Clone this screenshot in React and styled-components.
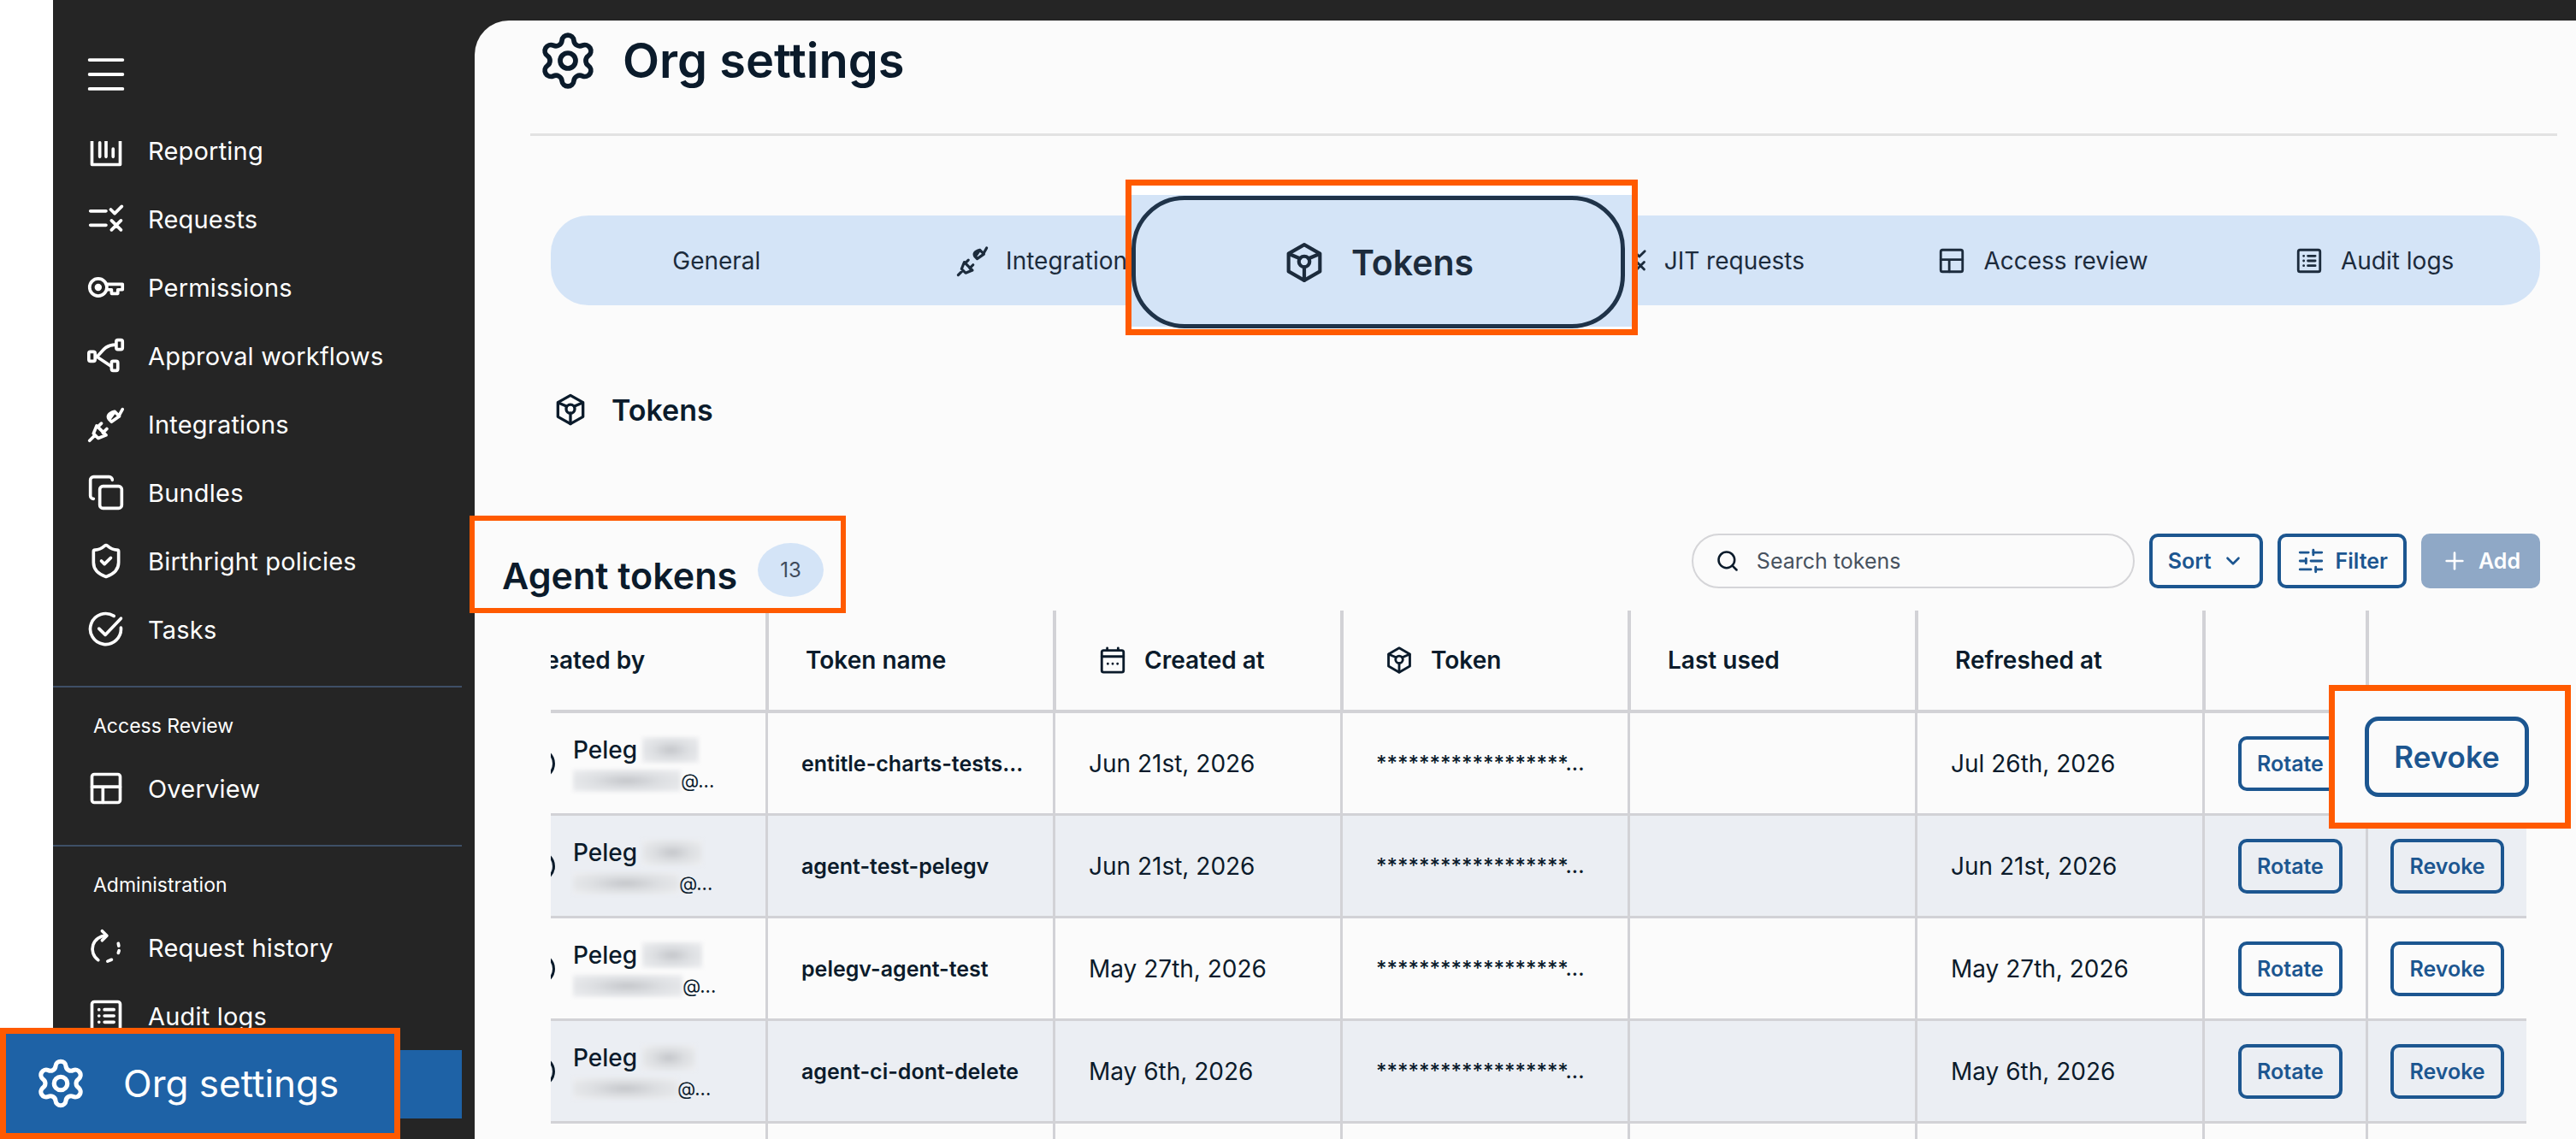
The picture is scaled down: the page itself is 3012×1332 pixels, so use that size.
import React from 'react';
import styled, {createGlobalStyle} from 'styled-components';
import {Menu, Settings, Search, ChevronDown, SlidersHorizontal, Plus, Copy, ShieldCheck} from 'lucide-react';

const FONT = '"Inter", "Noto Sans", sans-serif';
const NAVY = '#0b1b2b';
const BLUE = '#1c5690';
const ORANGE = '#ff5a00';
const COLUMNS = '251px 336px 336px 336px 336px 336px 191px 188px';

const GlobalStyle = createGlobalStyle`
    html, body {
        margin: 0;
        padding: 0;
        background: #ffffff;
        font-family: ${FONT};
    }
    * { box-sizing: border-box; }
`;

// icons the packages don't have in this shape
const Svg = ({size = 24, sw = 2, children}) => (
    <svg width={size} height={size} viewBox="0 0 24 24" fill="none" stroke="currentColor"
         strokeWidth={sw} strokeLinecap="round" strokeLinejoin="round">
        {children}
    </svg>
);

const ReportIcon = (p) => <Svg {...p}>
    <path d="M3 2v19h18V2"/><path d="M8 7v9M12 4v12M16.5 11v5"/>
</Svg>;
const RequestsIcon = (p) => <Svg {...p}>
    <path d="M2 7h10M2 16h10M15 6l2.5 2.5L22 4M15.5 13l6 6M21.5 13l-6 6"/>
</Svg>;
const KeyIcon = (p) => <Svg {...p}>
    <circle cx="7" cy="12" r="5.5"/><circle cx="7" cy="12" r="1.3" fill="currentColor"/>
    <path d="M12 10h10.5v3.5h-3V16h-4v-2.500H12.500"/>
</Svg>;
const WorkflowIcon = (p) => <Svg {...p}>
    <rect x="1" y="9.500" width="4" height="6" rx="1"/><rect x="18.500" y="2" width="4" height="6" rx="1"/>
    <rect x="15.500" y="15.500" width="4" height="6" rx="1"/>
    <path d="M5.500 12.500c3 0 4-7.500 12.500-7.500M6 12.500l9 6"/>
</Svg>;
const PlugIcon = (p) => <Svg {...p}>
    <path d="M1.500 22.500l3.500-3.500M5 19l-1-1 2-5 6 6-5 2zM9 11.500l-2.500 2.500M12.500 15l-2.500 2.500"/>
    <path d="M14 9l3.500-5 3 3-5 3.500zM14 9c-1.500-2-.5-4 3.500-5M20 7l2.500-4.500"/>
</Svg>;
const CircleCheckIcon = (p) => <Svg {...p}>
    <path d="M21.500 11a9.800 9.800 0 1 1-4.500-7.500"/><path d="M7.500 11.500l4 4L21.500 5"/>
</Svg>;
const LayoutIcon = (p) => <Svg {...p}>
    <rect x="3" y="3" width="18" height="18" rx="1.500"/><path d="M3 11h18M10 11v10"/>
</Svg>;
const HistoryIcon = (p) => <Svg {...p}>
    <path d="M12 4.500A8.500 8.500 0 0 0 7 20"/><path d="M9.500 1.500l3 3-3 3"/>
    <path d="M19.800 9.500l.3 1.500M20.300 14l-.5 1.500M15.500 19.800l-2.500 1"/>
</Svg>;
const ListBoxIcon = (p) => <Svg {...p}>
    <rect x="3" y="3" width="18" height="18" rx="1.500"/>
    <path d="M7.500 8h.01M7.500 12h.01M7.500 16h.01M11 8h6M11 12h6M11 16h6"/>
</Svg>;
const TokenIcon = (p) => <Svg {...p}>
    <path d="M12 2l8.800 5v10L12 22l-8.800-5V7z"/>
    <circle cx="12" cy="11.500" r="3"/>
    <path d="M3.500 7.200l6 2.500M20.500 7.200l-6 2.500M12 14.500V22"/>
</Svg>;
const CalendarIcon = (p) => <Svg {...p}>
    <rect x="3" y="4" width="18" height="18" rx="1.500"/>
    <path d="M3 9h18M7.500 2v2M16.500 2v2M8 15h.01M12 15h.01M16 15h.01"/>
</Svg>;

const mainNav = [
    {label: 'Reporting', Icon: ReportIcon},
    {label: 'Requests', Icon: RequestsIcon},
    {label: 'Permissions', Icon: KeyIcon},
    {label: 'Approval workflows', Icon: WorkflowIcon},
    {label: 'Integrations', Icon: PlugIcon},
    {label: 'Bundles', Icon: Copy},
    {label: 'Birthright policies', Icon: ShieldCheck},
    {label: 'Tasks', Icon: CircleCheckIcon},
];

const tabs = [
    {label: 'General'},
    {label: 'Integrations', Icon: PlugIcon},
    {label: 'Tokens', Icon: TokenIcon},
    {label: 'JIT requests', Icon: RequestsIcon},
    {label: 'Access review', Icon: LayoutIcon},
    {label: 'Audit logs', Icon: ListBoxIcon},
];

const rows = [
    {name: 'entitle-charts-tests...', created: 'Jun 21st, 2026', refreshed: 'Jul 26th, 2026', blur: 66, mail: 126},
    {name: 'agent-test-pelegv', created: 'Jun 21st, 2026', refreshed: 'Jun 21st, 2026', blur: 70, mail: 124},
    {name: 'pelegv-agent-test', created: 'May 27th, 2026', refreshed: 'May 27th, 2026', blur: 70, mail: 128},
    {name: 'agent-ci-dont-delete', created: 'May 6th, 2026', refreshed: 'May 6th, 2026', blur: 62, mail: 122},
    {name: '', created: '', refreshed: '', blur: 0, mail: 0},
];

const App = () => {
    return (
        <>
            <GlobalStyle/>
            <Page>
                <LeftGap/>
                <Sidebar>
                    <Burger><Menu size={58} strokeWidth={1.6}/></Burger>
                    <NavScroll>
                        {mainNav.map(({label, Icon}) => (
                            <NavItem key={label}><NavIcon><Icon size={44}/></NavIcon>{label}</NavItem>
                        ))}
                        <Divider/>
                        <SectionLabel>Access Review</SectionLabel>
                        <NavItem><NavIcon><LayoutIcon size={44}/></NavIcon>Overview</NavItem>
                        <Divider/>
                        <SectionLabel>Administration</SectionLabel>
                        <NavItem><NavIcon><HistoryIcon size={44}/></NavIcon>Request history</NavItem>
                        <NavItem><NavIcon><ListBoxIcon size={44}/></NavIcon>Audit logs</NavItem>
                        <NavItem $active/>
                    </NavScroll>
                </Sidebar>
                <Content>
                    <Main>
                        <Header>
                            <Settings size={72} strokeWidth={1.9} color={NAVY}/>
                            <Title>Org settings</Title>
                        </Header>
                        <TabBar>
                            {tabs.map(({label, Icon}) => (
                                <Tab key={label}>
                                    {Icon && <Icon size={label === 'Integrations' ? 38 : 34}/>}
                                    {label}
                                </Tab>
                            ))}
                            <TabCallout>
                                <ActivePill><TokenIcon size={50}/>Tokens</ActivePill>
                            </TabCallout>
                        </TabBar>
                        <SectionTitle><TokenIcon size={40}/>Tokens</SectionTitle>
                        <Toolbar>
                            <HeadingCallout>
                                <TableTitle>Agent tokens</TableTitle>
                                <CountBadge>13</CountBadge>
                            </HeadingCallout>
                            <SearchBox><Search size={28} strokeWidth={2.2} color={NAVY}/>Search tokens</SearchBox>
                            <OutlineBtn>Sort<ChevronDown size={26} strokeWidth={2.4}/></OutlineBtn>
                            <OutlineBtn><SlidersHorizontal size={34} strokeWidth={2}/>Filter</OutlineBtn>
                            <AddBtn><Plus size={32} strokeWidth={2}/>Add</AddBtn>
                        </Toolbar>
                        <Table>
                            <HeadRow>
                                <HeadCell $clip><CreatedBy>Created by</CreatedBy></HeadCell>
                                <HeadCell>Token name</HeadCell>
                                <HeadCell $pad={49}><CalendarIcon size={34}/>Created at</HeadCell>
                                <HeadCell $pad={48}><TokenIcon size={34}/>Token</HeadCell>
                                <HeadCell>Last used</HeadCell>
                                <HeadCell>Refreshed at</HeadCell>
                                <HeadCell/>
                                <HeadCell/>
                            </HeadRow>
                            {rows.map((row, i) => (
                                <Row key={i} $alt={i % 2 === 1}>
                                    <Cell $clip>
                                        {row.blur > 0 && <>
                                            <Avatar/>
                                            <Person>
                                                <PersonName>Peleg<Smudge $w={row.blur} $h={30}/></PersonName>
                                                <PersonMail><Smudge $w={row.mail} $h={26} $flush/>@...</PersonMail>
                                            </Person>
                                        </>}
                                    </Cell>
                                    <Cell><TokenName>{row.name}</TokenName></Cell>
                                    <Cell>{row.created}</Cell>
                                    <Cell>{row.blur > 0 && <Secret>******************...</Secret>}</Cell>
                                    <Cell/>
                                    <Cell>{row.refreshed}</Cell>
                                    <Cell>{row.blur > 0 && <RowBtn>Rotate</RowBtn>}</Cell>
                                    <Cell $center>
                                        {row.blur > 0 && <RowBtn>Revoke</RowBtn>}
                                        {i === 0 && <RevokeCallout><BigRevoke>Revoke</BigRevoke></RevokeCallout>}
                                    </Cell>
                                </Row>
                            ))}
                        </Table>
                    </Main>
                </Content>
                <OrgCallout><Settings size={62} strokeWidth={2}/>Org settings</OrgCallout>
            </Page>
        </>
    );
};

const Page = styled.div`
    position: relative;
    display: flex;
    width: 3012px;
    height: 1332px;
    overflow: hidden;
`;

const LeftGap = styled.div`
    width: 62px;
    flex: none;
    background: #ffffff;
`;

const Sidebar = styled.aside`
    width: 493px;
    flex: none;
    display: flex;
    flex-direction: column;
    padding-right: 15px;
    background: #252525;
    color: #ffffff;
`;

const Burger = styled.div`
    height: 165px;
    flex: none;
    padding: 58px 0 0 33px;
    & svg { display: block; }
`;

const NavScroll = styled.nav`
    flex: 1;
    overflow: hidden;
    & > :first-child { margin-top: -29px; }
`;

const NavItem = styled.div`
    display: flex;
    align-items: center;
    gap: 25px;
    height: 80px;
    padding-left: 38px;
    font-size: 29px;
    letter-spacing: 0.2px;
    background: ${(p) => (p.$active ? '#1e62a6' : 'transparent')};
`;

const NavIcon = styled.span`
    display: flex;
    justify-content: center;
    width: 48px;
`;

const Divider = styled.div`
    height: 2px;
    margin-top: 26px;
    background: #3e4f66;
`;

const SectionLabel = styled.div`
    display: flex;
    align-items: center;
    height: 78px;
    padding: 12px 0 0 47px;
    font-size: 23px;
`;

const Content = styled.div`
    flex: 1;
    min-width: 0;
    padding-top: 24px;
    background: #252525;
`;

const Main = styled.main`
    position: relative;
    height: 1308px;
    padding-left: 89px;
    padding-right: 42px;
    background: #fbfbfb;
    border-top-left-radius: 40px;
    color: ${NAVY};
`;

const Header = styled.header`
    display: flex;
    align-items: center;
    gap: 28px;
    height: 135px;
    margin: 0 -20px 0 -24px;
    padding: 0 0 38px 8px;
    border-bottom: 3px solid #e2e2e2;
`;

const Title = styled.h1`
    margin: 0;
    font-size: 56px;
    font-weight: 600;
`;

const TabBar = styled.div`
    position: relative;
    display: grid;
    grid-template-columns: repeat(6, 1fr);
    height: 105px;
    margin-top: 93px;
    background: #d4e4f7;
    border-radius: 44px;
`;

const Tab = styled.div`
    display: flex;
    align-items: center;
    justify-content: center;
    gap: 20px;
    font-size: 28px;
    color: #1c2b3c;
`;

const TabCallout = styled.div`
    position: absolute;
    left: 672px;
    top: -42px;
    width: 599px;
    height: 182px;
    padding: 12px 8px 0 0;
    border: 7px solid ${ORANGE};
    background: linear-gradient(#ffffff 11px, #d4e4f7 11px, #d4e4f7 165px, #ffffff 165px);
`;

const ActivePill = styled.div`
    display: flex;
    align-items: center;
    justify-content: center;
    gap: 30px;
    width: 100%;
    height: 155px;
    font-size: 41px;
    font-weight: 600;
    color: #1c2b3c;
    border: 5px solid #1f3349;
    border-radius: 62px;
`;

const SectionTitle = styled.h2`
    display: flex;
    align-items: center;
    gap: 28px;
    height: 40px;
    margin: 102px 0 0 3px;
    font-size: 34px;
    font-weight: 600;
`;

const Toolbar = styled.div`
    display: flex;
    align-items: center;
    justify-content: flex-end;
    gap: 17px;
    height: 64px;
    margin-top: 125px;
`;

const HeadingCallout = styled.div`
    position: absolute;
    left: -6px;
    top: 579px;
    z-index: 2;
    display: flex;
    align-items: center;
    gap: 24px;
    width: 440px;
    height: 114px;
    padding: 26px 0 0 32px;
    border: 6px solid ${ORANGE};
    background: #fbfbfb;
`;

const TableTitle = styled.div`
    font-size: 43px;
    font-weight: 600;
`;

const CountBadge = styled.div`
    display: flex;
    align-items: center;
    justify-content: center;
    width: 77px;
    height: 63px;
    margin-top: -14px;
    font-size: 24px;
    color: #3f4b5c;
    background: #d4e4f7;
    border-radius: 50%;
`;

const SearchBox = styled.div`
    display: flex;
    align-items: center;
    gap: 20px;
    width: 518px;
    height: 64px;
    padding-left: 26px;
    font-size: 25px;
    color: #47525f;
    border: 2px solid #d5d5d8;
    border-radius: 32px;
`;

const OutlineBtn = styled.div`
    display: flex;
    align-items: center;
    justify-content: center;
    gap: 12px;
    height: 64px;
    padding: 0 18px;
    font-size: 25px;
    font-weight: 600;
    color: ${BLUE};
    border: 4px solid ${BLUE};
    border-radius: 10px;
`;

const AddBtn = styled(OutlineBtn)`
    width: 139px;
    color: #ffffff;
    background: #8fa8c6;
    border-color: #8fa8c6;
`;

const Table = styled.div`
    width: 2310px;
    margin-top: 26px;
`;

const HeadRow = styled.div`
    display: grid;
    grid-template-columns: ${COLUMNS};
    height: 120px;
    border-bottom: 4px solid #d2d2d6;
`;

const HeadCell = styled.div`
    display: flex;
    align-items: center;
    gap: 20px;
    padding-left: ${(p) => (p.$clip ? 0 : p.$pad || 43)}px;
    font-size: 28px;
    font-weight: 600;
    overflow: ${(p) => (p.$clip ? 'hidden' : 'visible')};
    white-space: nowrap;
    & + & { border-left: 4px solid #d2d2d6; }
`;

const CreatedBy = styled.span`
    margin-left: -38px;
`;

const Row = styled.div`
    display: grid;
    grid-template-columns: ${COLUMNS};
    height: 120px;
    background: ${(p) => (p.$alt ? '#ebeef3' : 'transparent')};
    border-bottom: 3px solid #d2d2d6;
`;

const Cell = styled.div`
    position: relative;
    display: flex;
    align-items: center;
    justify-content: ${(p) => (p.$center ? 'center' : 'flex-start')};
    padding-left: ${(p) => (p.$center || p.$clip ? 0 : 39)}px;
    font-size: 28px;
    white-space: nowrap;
    overflow: ${(p) => (p.$clip ? 'hidden' : 'visible')};
    & + & { border-left: 3px solid #d2d2d6; }
`;

const Avatar = styled.span`
    flex: none;
    width: 36px;
    height: 36px;
    margin-left: -31px;
    border: 3px solid ${NAVY};
    border-radius: 50%;
`;

const Person = styled.div`
    display: flex;
    flex-direction: column;
    gap: 6px;
    margin-left: 21px;
`;

const PersonName = styled.div`
    display: flex;
    align-items: center;
    gap: 6px;
    font-size: 28px;
    font-weight: 500;
`;

const PersonMail = styled.div`
    display: flex;
    align-items: center;
    font-size: 22px;
`;

const Smudge = styled.span`
    display: inline-block;
    width: ${(p) => p.$w}px;
    height: ${(p) => p.$h}px;
    background: radial-gradient(ellipse at 50% 50%, #c4c6ca 0%, #dddfe2 45%, #eeeff1 100%);
    filter: blur(2px);
`;

const TokenName = styled.span`
    font-size: 25px;
    font-weight: 600;
`;

const Secret = styled.span`
    font-size: 24px;
    font-weight: 500;
`;

const RowBtn = styled.div`
    display: flex;
    align-items: center;
    justify-content: center;
    height: 64px;
    padding: 0 18px;
    font-size: 25px;
    font-weight: 600;
    color: ${BLUE};
    border: 4px solid ${BLUE};
    border-radius: 10px;
`;

const RevokeCallout = styled.div`
    position: absolute;
    left: -46px;
    top: -33px;
    z-index: 2;
    display: flex;
    align-items: center;
    width: 283px;
    height: 168px;
    padding-left: 35px;
    border: 7px solid ${ORANGE};
    background: #fbfbfb;
`;

const BigRevoke = styled.div`
    display: flex;
    align-items: center;
    justify-content: center;
    width: 192px;
    height: 94px;
    font-size: 35px;
    font-weight: 600;
    color: ${BLUE};
    border: 5px solid ${BLUE};
    border-radius: 16px;
`;

const OrgCallout = styled.div`
    position: absolute;
    left: 0;
    bottom: 0;
    z-index: 3;
    display: flex;
    align-items: center;
    gap: 42px;
    width: 468px;
    height: 130px;
    padding-left: 33px;
    font-size: 44px;
    color: #ffffff;
    background: #1e62a6;
    border: 7px solid ${ORANGE};
`;

export default App;
